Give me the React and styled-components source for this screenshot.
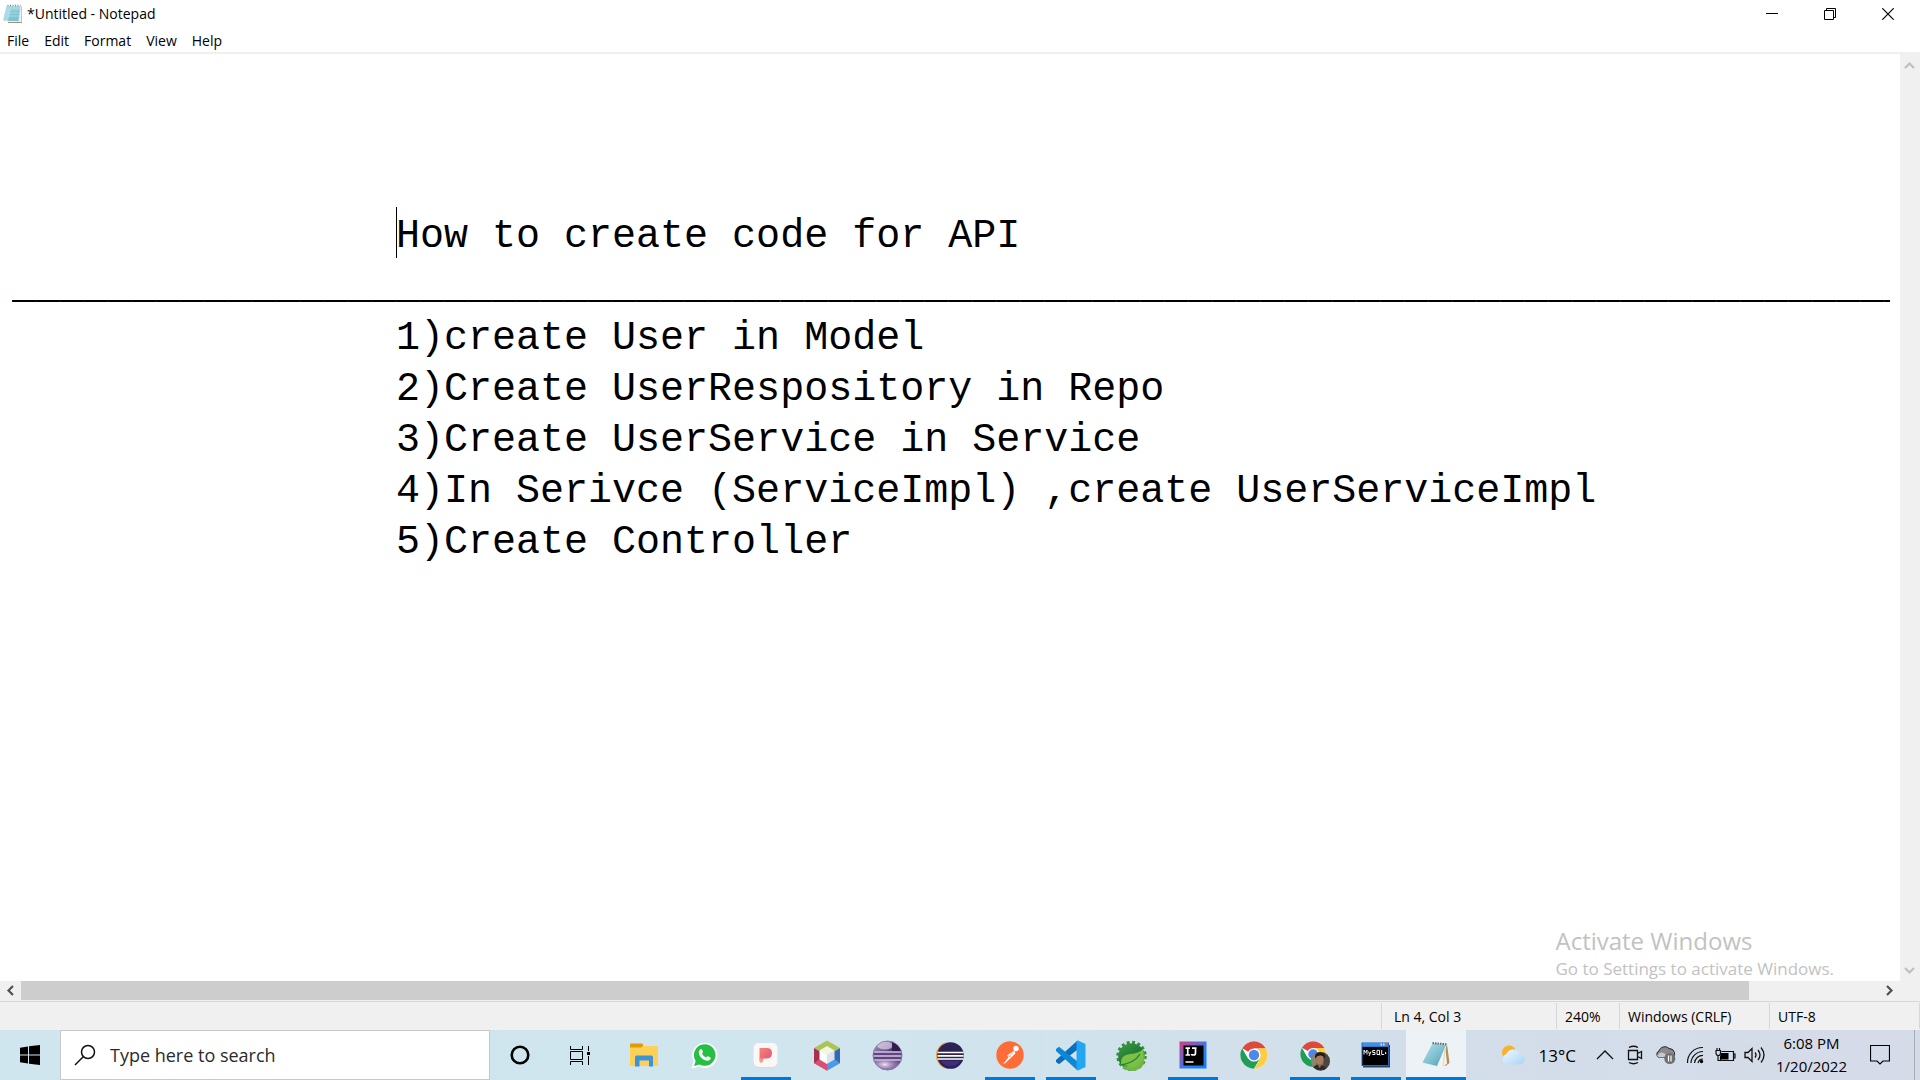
import React from "react";
import styled, { createGlobalStyle } from "styled-components";

const ui = '"Open Sans", "Noto Sans", sans-serif';

const Global = createGlobalStyle`
  *, *::before, *::after { box-sizing: border-box; }
  body { margin: 0; background: #fff; font-family: ${ui}; color: #000; overflow: hidden; }
  button, input, textarea { font: inherit; color: inherit; }
  svg { display: block; flex: none; }
`;

const Screen = styled.div`
  display: flex;
  flex-direction: column;
  height: 100vh;
`;

/* ---------- window ---------- */
const Window = styled.main`
  flex: 1;
  min-height: 0;
  display: flex;
  flex-direction: column;
  background: #fff;
`;

const TitleBar = styled.header`
  display: flex;
  align-items: center;
  height: 28px;
  padding: 0 3px;
`;

const Title = styled.h1`
  flex: 1;
  margin: 0 0 0 4px;
  font-size: 14px;
  line-height: 20px;
  font-weight: 400;
`;

const Plain = styled.button`
  display: flex;
  align-items: center;
  justify-content: center;
  padding: 0;
  border: 0;
  background: transparent;
  cursor: default;
`;

const Caption = styled(Plain)`
  width: 58px;
  height: 28px;
`;

const MenuBar = styled.nav`
  display: flex;
  align-items: flex-end;
  height: 26px;
  padding: 0 7px;
  gap: 15px;
  border-bottom: 2px solid #f0f0f0;
`;

const MenuItem = styled(Plain)`
  font-size: 14px;
  line-height: 23px;
`;

const Body = styled.div`
  flex: 1;
  min-height: 0;
  display: flex;
`;

const Page = styled.div`
  position: relative;
  flex: 1;
  min-width: 0;
  padding: 4px 10px 0 12px;
  font-family: "Liberation Mono", "DejaVu Sans Mono", monospace;
  font-size: 40px;
  line-height: 51px;
`;

const Text = styled.textarea`
  display: block;
  width: 100%;
  height: 100%;
  padding: 0;
  border: 0;
  outline: 0;
  resize: none;
  overflow: hidden;
  white-space: pre;
  background: transparent;
`;

const Caret = styled.span`
  position: absolute;
  left: calc(12px + 16ch);
  top: calc(3 * 51px);
  width: 1px;
  height: 51px;
  background: #000;
`;

const Watermark = styled.aside`
  position: absolute;
  right: 66px;
  bottom: 0;
  font-family: ${ui};
  color: #c2c2c2;
  pointer-events: none;
`;

const WatermarkTitle = styled.p`
  margin: 0;
  font-size: 24px;
  line-height: 32px;
`;

const WatermarkNote = styled.p`
  margin: 0;
  font-size: 17px;
  line-height: 24px;
`;

const VScroll = styled.div`
  display: flex;
  flex-direction: column;
  justify-content: space-between;
  width: 20px;
  background: #f0f0f0;
`;

const HScroll = styled.div`
  display: flex;
  height: 20px;
  padding: 0 20px 1px 0;
  background: #f0f0f0;
`;

const VArrow = styled(Plain)`
  width: 19px;
  height: 22px;
`;

const HArrow = styled(Plain)`
  width: 21px;
  height: 19px;
`;

const Track = styled.div`
  flex: 1;
`;

const Thumb = styled.div`
  width: 93%;
  height: 100%;
  background: #cdcdcd;
`;

const StatusBar = styled.footer`
  display: flex;
  justify-content: flex-end;
  height: 29px;
  padding: 1px 0;
  border-top: 1px solid #d7d7d7;
  background: #f0f0f0;
  font-size: 14px;
  line-height: 27px;
`;

const Status = styled.span`
  width: ${(p) => p.$w}px;
  padding-left: ${(p) => p.$pad || 8}px;
  border-left: 1px solid #d7d7d7;
  white-space: nowrap;
  &:last-child { border-right: 1px solid #d7d7d7; }
`;

/* ---------- taskbar ---------- */
const TaskBar = styled.footer`
  display: flex;
  height: 50px;
  background: linear-gradient(90deg, #cfe6ee 0%, #d0e5ee 45%, #d2deea 75%, #d6dbe8 100%);
`;

const Slot = styled(Plain)`
  width: 60px;
  height: 50px;
`;

const Search = styled.label`
  display: flex;
  align-items: center;
  width: 430px;
  padding-left: 13px;
  gap: 14px;
  border: 1px solid #c8c8c8;
  background: #fff;
`;

const SearchInput = styled.input`
  flex: 1;
  min-width: 0;
  height: 40px;
  padding: 0;
  border: 0;
  outline: 0;
  background: transparent;
  font-size: 18px;
  &::placeholder { color: #2b2b2b; opacity: 1; }
`;

const Apps = styled.div`
  display: flex;
  padding-left: 3px;
`;

const TaskButton = styled(Plain)`
  position: relative;
  width: 61px;
  height: 50px;
  &::after {
    content: "";
    position: absolute;
    left: 6px;
    right: 5px;
    bottom: 0;
    height: 3px;
    background: ${(p) => (p.$running ? "#0078d7" : "transparent")};
  }
`;

const ActiveTask = styled(TaskButton)`
  width: 60px;
  background: #edf2f7;
  &::after { left: 0; right: 0; }
`;

const Tray = styled.div`
  display: flex;
  align-items: center;
  margin-left: auto;
`;

const Weather = styled(Plain)`
  gap: 12px;
  margin-right: 14px;
  font-size: 17px;
`;

const TrayIcon = styled(Plain)`
  width: 30px;
  height: 50px;
`;

const Clock = styled(Plain)`
  flex-direction: column;
  width: 75px;
  padding-left: 8px;
  font-size: 15px;
  line-height: 23px;
  white-space: nowrap;
`;

const Notify = styled(Plain)`
  width: 70px;
  height: 50px;
  border-right: 1px solid #a4abb8;
  margin-right: 5px;
`;

/* ---------- drawings ---------- */
const Notepad = () => (
  <svg width="28" height="28" viewBox="0 0 28 28">
    <defs>
      <linearGradient id="np" x1="0" y1="0" x2="1" y2="1">
        <stop offset="0" stopColor="#b5e0e9" />
        <stop offset=".5" stopColor="#84c3d2" />
        <stop offset="1" stopColor="#4a9db3" />
      </linearGradient>
    </defs>
    <path d="M25 3 27.500 22 23.500 25 20 22Z" fill="#b58d55" />
    <path d="M23 3 25 23 17 26.500 15 24Z" fill="#f4f3ee" />
    <path d="M23.500 4 21 25" stroke="#cfc9bb" strokeWidth=".7" />
    <path d="M10.500 2 24.500 3.500 15.500 26.500 0 22.500Z" fill="#e6f2f5" />
    <path d="M10.500 2.500 24 4 15 25 .5 21.500Z" fill="url(#np)" />
    <path d="M10.500 2 25 3.400" stroke="#59656c" strokeWidth="2" strokeDasharray="1.500 1" />
  </svg>
);

const NotepadSmall = () => (
  <svg width="20" height="20" viewBox="0 0 20 20">
    <path d="M4 2.500h15v16.500H5Z" fill="#a79177" />
    <path d="M4 2h14.500v16H4Z" fill="#eef4f5" />
    <path d="M3.500 2h14L16 17.500 0 16.500Z" fill="#a9dae4" />
    <path d="M8 5h8.500l-1.300 12H5Z" fill="#7fc3d2" />
    <path d="M4 6h12M3 9h12.500M2.500 12H15" stroke="#b6e2ea" strokeWidth=".8" />
    <path d="M4.500 1.500h13" stroke="#7b868b" strokeWidth="1.600" strokeDasharray="1 1.500" />
  </svg>
);

const Chev = ({ d, c }) => (
  <svg width="11" height="11" viewBox="0 0 11 11">
    <path d={d} fill="none" stroke={c} strokeWidth="2.200" />
  </svg>
);

const Explorer = () => (
  <svg width="28" height="24" viewBox="0 0 28 24">
    <path d="M0 3h28v19a1 1 0 0 1-1 1H1a1 1 0 0 1-1-1Z" fill="#fdd058" />
    <path d="M0 1.500Q0 .500 1 .500h11l1.500 1.500-2 2.500H0Z" fill="#df9c07" />
    <path d="M5 23.500V14q0-1.500 1.500-1.500h15Q23 12.500 23 14v9.500h-4V17.500H9.500v6Z" fill="#3c93d9" />
  </svg>
);

const WhatsApp = () => (
  <svg width="27" height="27" viewBox="0 0 27 27">
    <path d="M.5 26.500 2.700 19.500A12.700 12.700 0 1 1 8 24.700Z" fill="#fff" />
    <path d="M3 24 4.700 19A10.800 10.800 0 1 1 8.500 22.500Z" fill="#25c043" />
    <path d="M9.300 7.200c.5-.5 1.300-.4 1.600.2l1 2.200c.2.500 0 .9-.9 1.900.8 1.900 2.400 3.300 4.300 4 .9-1.200 1.200-1.400 1.700-1.200l2.300 1.100c.5.300.5.700.3 1.400-.6 1.500-2.100 2.100-3.500 1.900-4.500-.8-8.200-4.700-8.300-8.300 0-1.200.6-2.500 1.500-3.200Z" fill="#fff" />
  </svg>
);

const PApp = () => (
  <svg width="25" height="26" viewBox="0 0 25 26">
    <defs>
      <linearGradient id="pp" x1="0" y1="0" x2="1" y2="1">
        <stop offset="0" stopColor="#f58a72" />
        <stop offset="1" stopColor="#e04e80" />
      </linearGradient>
    </defs>
    <rect x=".5" y="1.500" width="24" height="24" rx="5" fill="#c9d6db" />
    <rect x=".5" y="1" width="24" height="24" rx="5" fill="#fbf7f6" />
    <path d="M6.500 6h7.500q5 0 5 5t-5 5.500h-3.500l-1.500 1.500h-2.500Z" fill="url(#pp)" />
    <path d="M6.500 16.500H11L9.500 20q-.5.800-1.500.800t-1.500-1.500Z" fill="#f0a07a" />
  </svg>
);

const NetBeans = () => (
  <svg width="28" height="31" viewBox="0 0 28 31">
    <path d="M14 .5 27 8l-6 3.500L14 8 7 11.500 1 8Z" fill="#acc453" />
    <path d="M1 8l6 3.500V19l7 4.500v7L1 23Z" fill="#a72f52" />
    <path d="M1 23l6-4 7 4.500v7Z" fill="#dd4c72" />
    <path d="M27 8l-6 3.500V19l-7 4.500v7L27 23Z" fill="#3568b8" />
    <path d="M27 23l-6-4-7 4.500v7Z" fill="#4a9be9" />
    <path d="M14 6l7.500 4.500L14 15 6.500 10.500Z" fill="#f1f5e2" />
    <path d="M6.500 10.500 14 15v9l-7.500-4.500Z" fill="#fff" />
    <path d="M21.500 10.500 14 15v9l7.500-4.500Z" fill="#dbe3ea" />
  </svg>
);

const EclipseOld = () => (
  <svg width="31" height="31" viewBox="0 0 31 31">
    <defs>
      <linearGradient id="eo" x1="0" y1="0" x2="1" y2="1">
        <stop offset="0" stopColor="#b7a3c9" />
        <stop offset=".35" stopColor="#715890" />
        <stop offset=".6" stopColor="#43285f" />
        <stop offset="1" stopColor="#7b5aa3" />
      </linearGradient>
      <radialGradient id="eog" cx=".45" cy=".5" r=".6">
        <stop offset="0" stopColor="#f0e6f8" />
        <stop offset="1" stopColor="#8a68ae" stopOpacity=".4" />
      </radialGradient>
      <clipPath id="eoc"><circle cx="15.500" cy="15.500" r="14" /></clipPath>
    </defs>
    <circle cx="15.500" cy="15.500" r="14.500" fill="url(#eo)" stroke="#8d7ba3" />
    <g clipPath="url(#eoc)">
      <ellipse cx="13" cy="5.500" rx="8" ry="4" fill="#efe8f5" opacity=".6" />
      <path d="M20 2q9 3 10 11H20Z" fill="#341c50" />
      <ellipse cx="14" cy="24.500" rx="13" ry="6.500" fill="url(#eog)" />
      <path d="M0 11.800h31v8.500H0Z" fill="#5f4482" />
      <path d="M0 12h31M0 16h31M0 20h31" stroke="#d3c5e0" strokeWidth="1.500" />
    </g>
  </svg>
);

const Eclipse = () => (
  <svg width="31" height="29" viewBox="0 0 31 29">
    <path d="M14 .8A14 14 0 0 0 14 28.200Q5 24 5 14.500T14 .8Z" fill="#f79a29" />
    <circle cx="17.500" cy="14.500" r="13.300" fill="#2c2255" />
    <path d="M8 20h19q-3 5-9.500 5T8 20Z" fill="#3e2e80" />
    <path d="M4.500 11.500h26M4.500 14.800h26M4.500 18h26" stroke="#fff" strokeWidth="1.700" />
  </svg>
);

const Postman = () => (
  <svg width="28" height="28" viewBox="0 0 28 28">
    <circle cx="14" cy="14" r="13.700" fill="#ff6c37" />
    <circle cx="20" cy="7.500" r="2.700" fill="#fff" />
    <path d="M18.300 9.500 11 14.500 12.500 16 8.500 21.500 6.500 22.300l2.500.2 6-5.700 4.500-4.500Z" fill="#fff" />
    <path d="M12 14.500 15.500 16.500M18 10.500 13 16" stroke="#ff9a78" strokeWidth=".7" />
  </svg>
);

const VSCode = () => (
  <svg width="31" height="31" viewBox="0 0 31 31">
    <path d="M22.500 8.500v-8L1 20v2l3 2.300L22.500 9.500Z" fill="#0a6ebd" />
    <path d="M22.500 22.500v8L1 11V9l3-2.300L22.500 21.500Z" fill="#0d87d6" />
    <path d="M23 .5 30.500 4v23L23 30.500l-1.500-1V1.500Z" fill="#24a6f2" />
  </svg>
);

const Spring = () => (
  <svg width="31" height="31" viewBox="0 0 31 31">
    <defs>
      <linearGradient id="sp" x1=".2" y1="0" x2=".8" y2="1">
        <stop offset="0" stopColor="#3a9a3c" />
        <stop offset=".5" stopColor="#1f7a35" />
        <stop offset=".75" stopColor="#76bd43" />
      </linearGradient>
    </defs>
    <circle cx="15.500" cy="16" r="13.200" fill="none" stroke="#2f9138" strokeWidth="4" strokeDasharray="2.800 2.400" />
    <circle cx="15.500" cy="16.500" r="13.300" fill="url(#sp)" />
    <path d="M5 24Q4 15 14 14q9-.5 13-5 2.500 10-4 14.500T9 24.500Z" fill="#7cc046" />
    <path d="M5 25q6-1 11-3.500T24 14" stroke="#23803a" strokeWidth="1.300" fill="none" />
    <path d="M4 23.500q5 5.500 12.500 4.500T28 18q1 8-5.500 11.300t-13.500.2Z" fill="#6fb741" />
  </svg>
);

const IntelliJ = () => (
  <svg width="28" height="28" viewBox="0 0 28 28">
    <defs>
      <linearGradient id="ij" x1="0" y1="0" x2="1" y2="1">
        <stop offset="0" stopColor="#d0407c" />
        <stop offset=".35" stopColor="#7c5fc0" />
        <stop offset=".6" stopColor="#2c7df5" />
        <stop offset="1" stopColor="#0b7dfd" />
      </linearGradient>
    </defs>
    <path d="M.5.5h27v27H.5Z" fill="url(#ij)" />
    <path d="M4.500 4.500h20v20h-20Z" fill="#000" />
    <path d="M6.500 7.200h4.500M6.500 14h4.500M8.750 7v7M13 7.200h4.500M16.500 7v5q0 2-2 2t-2-1" stroke="#fff" strokeWidth="1.700" fill="none" />
    <path d="M6.500 21h8" stroke="#ddd" strokeWidth="1.700" />
  </svg>
);

const ChromeArt = () => (
  <g>
    <circle cx="14" cy="14" r="13.700" fill="#fff" />
    <path d="M14 14 2.140 7.150A13.700 13.700 0 0 1 25.860 7.150L26 7.500H14Z" fill="#dc4a3d" />
    <path d="M2.140 7.150A13.700 13.700 0 0 0 14 27.700L19.900 17.500 14 14 8 17.500Z" fill="#1e9e57" />
    <path d="M14 27.700A13.700 13.700 0 0 0 26 7.500H14L20 17.500Z" fill="#fdcd45" />
    <circle cx="14" cy="14" r="6.600" fill="#fff" />
    <circle cx="14" cy="14" r="5.200" fill="#4c88ee" />
  </g>
);

const Chrome = () => (
  <svg width="28" height="28" viewBox="0 0 28 28"><ChromeArt /></svg>
);

const ChromeProfile = () => (
  <svg width="32" height="31" viewBox="0 -1 32 33">
    <defs><clipPath id="cp"><circle cx="21.800" cy="21.500" r="10" /></clipPath></defs>
    <ChromeArt />
    <g clipPath="url(#cp)">
      <path d="M11 11h21v21H11Z" fill="#6f6a5c" />
      <path d="M11 11h6v21h-6Z" fill="#8a8672" />
      <path d="M25 11h7v21h-7Z" fill="#4a4740" />
      <path d="M12 32q2-7 8-7t11 7Z" fill="#2c2a2e" />
      <ellipse cx="21" cy="20" rx="4" ry="5.500" fill="#a8795c" />
      <path d="M16 19q-1-7 5.500-7t5 7l-1.500-2.500q-3-2-7 0Z" fill="#211b1a" />
      <path d="M18.500 24.500h5L21 29Z" fill="#96694f" />
    </g>
  </svg>
);

const MySql = () => (
  <svg width="29" height="26" viewBox="0 0 29 26">
    <path d="M2 3h27v22.500H2Z" fill="#24427a" />
    <path d="M.5.500h27.500v23.500H.5Z" fill="#2d62ae" />
    <path d="M1.500 1h25.500v3.500H1.500Z" fill="#2b97f5" />
    <path d="M19.500 1.500h1.500v2h-1.500ZM22 1.500h1.500v2H22Z" fill="#d6e9fb" />
    <path d="M24.500 1.500h2v2h-2Z" fill="#e2574b" />
    <path d="M1.500 5h25.500v18H1.500Z" fill="#000" />
    <path d="M3 12.500V8l1.500 2.500L6 8v4.500M7.500 9.500l1.200 3 1.300-3M8.700 12.500l-.8 1.500M14.200 8.500h-2.500v2h2.300v2h-2.600M16 8.300h2.500v4.200H16ZM18 12l1.200 1.500M20.700 8v4.500h2.500M24 10l1.200 1-1.200 1" stroke="#f4f4f4" strokeWidth="1" fill="none" />
  </svg>
);

const apps = [
  ["File Explorer", Explorer],
  ["WhatsApp", WhatsApp],
  ["P", PApp, true],
  ["NetBeans", NetBeans],
  ["Eclipse Classic", EclipseOld],
  ["Eclipse", Eclipse],
  ["Postman", Postman, true],
  ["Visual Studio Code", VSCode, true],
  ["Spring Tools", Spring],
  ["IntelliJ IDEA", IntelliJ, true],
  ["Chrome", Chrome],
  ["Chrome profile", ChromeProfile, true],
  ["MySQL", MySql, true],
];

const line = { fill: "none", stroke: "#111", strokeWidth: 1.3 };

const indent = " ".repeat(16);
const content = [
  "", "", "",
  indent + "How to create code for API",
  "_".repeat(79),
  indent + "1)create User in Model",
  indent + "2)Create UserRespository in Repo",
  indent + "3)Create UserService in Service",
  indent + "4)In Serivce (ServiceImpl) ,create UserServiceImpl",
  indent + "5)Create Controller",
].join("\n");

export default function App() {
  return (
    <Screen>
      <Global />
      <Window>
        <TitleBar>
          <NotepadSmall />
          <Title>*Untitled - Notepad</Title>
          <Caption aria-label="Minimize">
            <svg width="12" height="12" viewBox="0 0 12 12"><path d="M0 5.500h12" stroke="#000" /></svg>
          </Caption>
          <Caption aria-label="Restore">
            <svg width="12" height="12" viewBox="0 0 12 12"><path d="M.5 2.500h9v9h-9ZM2.500 2.500v-2h9v9h-2" fill="none" stroke="#000" /></svg>
          </Caption>
          <Caption aria-label="Close">
            <svg width="12" height="12" viewBox="0 0 12 12"><path d="M.3.3l11.400 11.400M11.700.3.3 11.700" stroke="#000" strokeWidth="1.200" /></svg>
          </Caption>
        </TitleBar>
        <MenuBar>
          {["File", "Edit", "Format", "View", "Help"].map((m) => <MenuItem key={m}>{m}</MenuItem>)}
        </MenuBar>
        <Body>
          <Page>
            <Text aria-label="Text editor" spellCheck={false} defaultValue={content} />
            <Caret />
            <Watermark>
              <WatermarkTitle>Activate Windows</WatermarkTitle>
              <WatermarkNote>Go to Settings to activate Windows.</WatermarkNote>
            </Watermark>
          </Page>
          <VScroll>
            <VArrow aria-label="Scroll up"><Chev d="M1 8 5.500 3.500 10 8" c="#bfbfbf" /></VArrow>
            <VArrow aria-label="Scroll down"><Chev d="M1 3 5.500 7.500 10 3" c="#bfbfbf" /></VArrow>
          </VScroll>
        </Body>
        <HScroll>
          <HArrow aria-label="Scroll left"><Chev d="M8 1 3.500 5.500 8 10" c="#505050" /></HArrow>
          <Track><Thumb /></Track>
          <HArrow aria-label="Scroll right"><Chev d="M3 1 7.500 5.500 3 10" c="#505050" /></HArrow>
        </HScroll>
        <StatusBar>
          <Status $w={175} $pad={12}>Ln 4, Col 3</Status>
          <Status $w={63}>240%</Status>
          <Status $w={150}>Windows (CRLF)</Status>
          <Status $w={151}>UTF-8</Status>
        </StatusBar>
      </Window>
      <TaskBar>
        <Slot aria-label="Start">
          <svg width="20" height="20" viewBox="0 0 20 20"><path d="M0 2.800 8 1.500v8H0ZM9 1.300 20 0v9.500H9ZM0 10.500h8v8L0 17.200ZM9 10.500h11V20L9 18.700Z" /></svg>
        </Slot>
        <Search>
          <svg width="22" height="22" viewBox="0 0 22 22"><circle cx="14" cy="8" r="6.500" {...line} strokeWidth="1.500" /><path d="M9.200 12.800 1 21" {...line} strokeWidth="1.500" /></svg>
          <SearchInput aria-label="Search" placeholder="Type here to search" />
        </Search>
        <Slot aria-label="Cortana">
          <svg width="20" height="20" viewBox="0 0 20 20"><circle cx="10" cy="10" r="8.300" fill="none" stroke="#000" strokeWidth="2.600" /></svg>
        </Slot>
        <Slot aria-label="Task View">
          <svg width="21" height="19" viewBox="0 0 21 19"><path d="M.5 0v3.500h12V0M.5 5.500h12v8H.5ZM.5 19v-3.500h12V19M18.500 0v5M18.500 10v9" fill="none" stroke="#000" /><path d="M17 6h3v3h-3Z" /></svg>
        </Slot>
        <Apps>
          {apps.map(([name, Icon, running]) => (
            <TaskButton key={name} aria-label={name} $running={running}><Icon /></TaskButton>
          ))}
          <ActiveTask aria-label="Notepad" $running><Notepad /></ActiveTask>
        </Apps>
        <Tray>
          <Weather>
            <svg width="26" height="20" viewBox="0 0 26 20">
              <defs><linearGradient id="cl" x1="0" y1="0" x2="1" y2="1"><stop offset="0" stopColor="#eef8ff" /><stop offset="1" stopColor="#a8d4f5" /></linearGradient></defs>
              <circle cx="8" cy="7.500" r="7" fill="#f7b32b" />
              <path d="M6 19.500a5.500 5.500 0 0 1-.5-10.500A7 7 0 0 1 18 8a6 6 0 0 1 2 11.500Z" fill="url(#cl)" />
            </svg>
            13°C
          </Weather>
          <TrayIcon aria-label="Show hidden icons">
            <svg width="18" height="10" viewBox="0 0 18 10"><path d="M1 9 9 1l8 8" {...line} /></svg>
          </TrayIcon>
          <TrayIcon aria-label="Meet Now">
            <svg width="16" height="20" viewBox="0 0 16 20"><path d="M1.500 5.500h9v9h-9ZM10.500 8.500l4-2v7l-4-2M2 2.500q4.500-2.500 9 0M2 17.500q4.500 2.500 9 0" {...line} /></svg>
          </TrayIcon>
          <TrayIcon aria-label="OneDrive">
            <svg width="21" height="20" viewBox="0 0 21 20"><path d="M4 12.500a3.500 3.500 0 0 1 0-6.500 6 6 0 0 1 10-2.500q4.500 0 5.500 4 .8 4.500-3.500 5Z" fill="#8a8a8a" stroke="#222" /><path d="M2 10.500Q7 4.500 12 11l-1 1.500H4Z" fill="#c5c8cc" /><circle cx="14.800" cy="13.500" r="5.500" fill="#6f6f6f" /><path d="M13.500 10.500v6M16 10.500v6" stroke="#fff" strokeWidth="1.200" /></svg>
          </TrayIcon>
          <TrayIcon aria-label="Network">
            <svg width="18" height="18" viewBox="0 0 18 18"><path d="M1.500 17A15 15 0 0 1 17 1.500M5 17A12 12 0 0 1 17 5.500M8.500 17A8.500 8.500 0 0 1 17 9.300M12 17q1-4 5-4" {...line} strokeWidth="1.200" /><circle cx="15.500" cy="15.500" r="1.700" /></svg>
          </TrayIcon>
          <TrayIcon aria-label="Battery">
            <svg width="21" height="15" viewBox="0 0 21 15"><path d="M6.500 3.500h12v9h-13V9M18.500 6h1.500v4h-1.500M3 8v4.500h3M1 2.500h4.500V5q0 2.500-2.200 2.500T1 5ZM2 2.500V0M4.500 2.500V0" {...line} strokeWidth="1.200" /><path d="M6 5h7.500v6.500H5V8.500Z" /></svg>
          </TrayIcon>
          <TrayIcon aria-label="Volume">
            <svg width="22" height="18" viewBox="0 0 22 18"><path d="M1 6.500h3l4-4v13l-4-4H1ZM11 6.500q2 2.500 0 5M14 4q4 5 0 10M17 1.500q6 7.500 0 15" {...line} /></svg>
          </TrayIcon>
          <Clock><span>6:08 PM</span><span>1/20/2022</span></Clock>
          <Notify aria-label="Notifications">
            <svg width="20" height="20" viewBox="0 0 20 20"><path d="M.5.500h19v15.500H13l-3 3-3-3H.5Z" fill="none" stroke="#000" strokeWidth="1.200" /></svg>
          </Notify>
        </Tray>
      </TaskBar>
    </Screen>
  );
}
